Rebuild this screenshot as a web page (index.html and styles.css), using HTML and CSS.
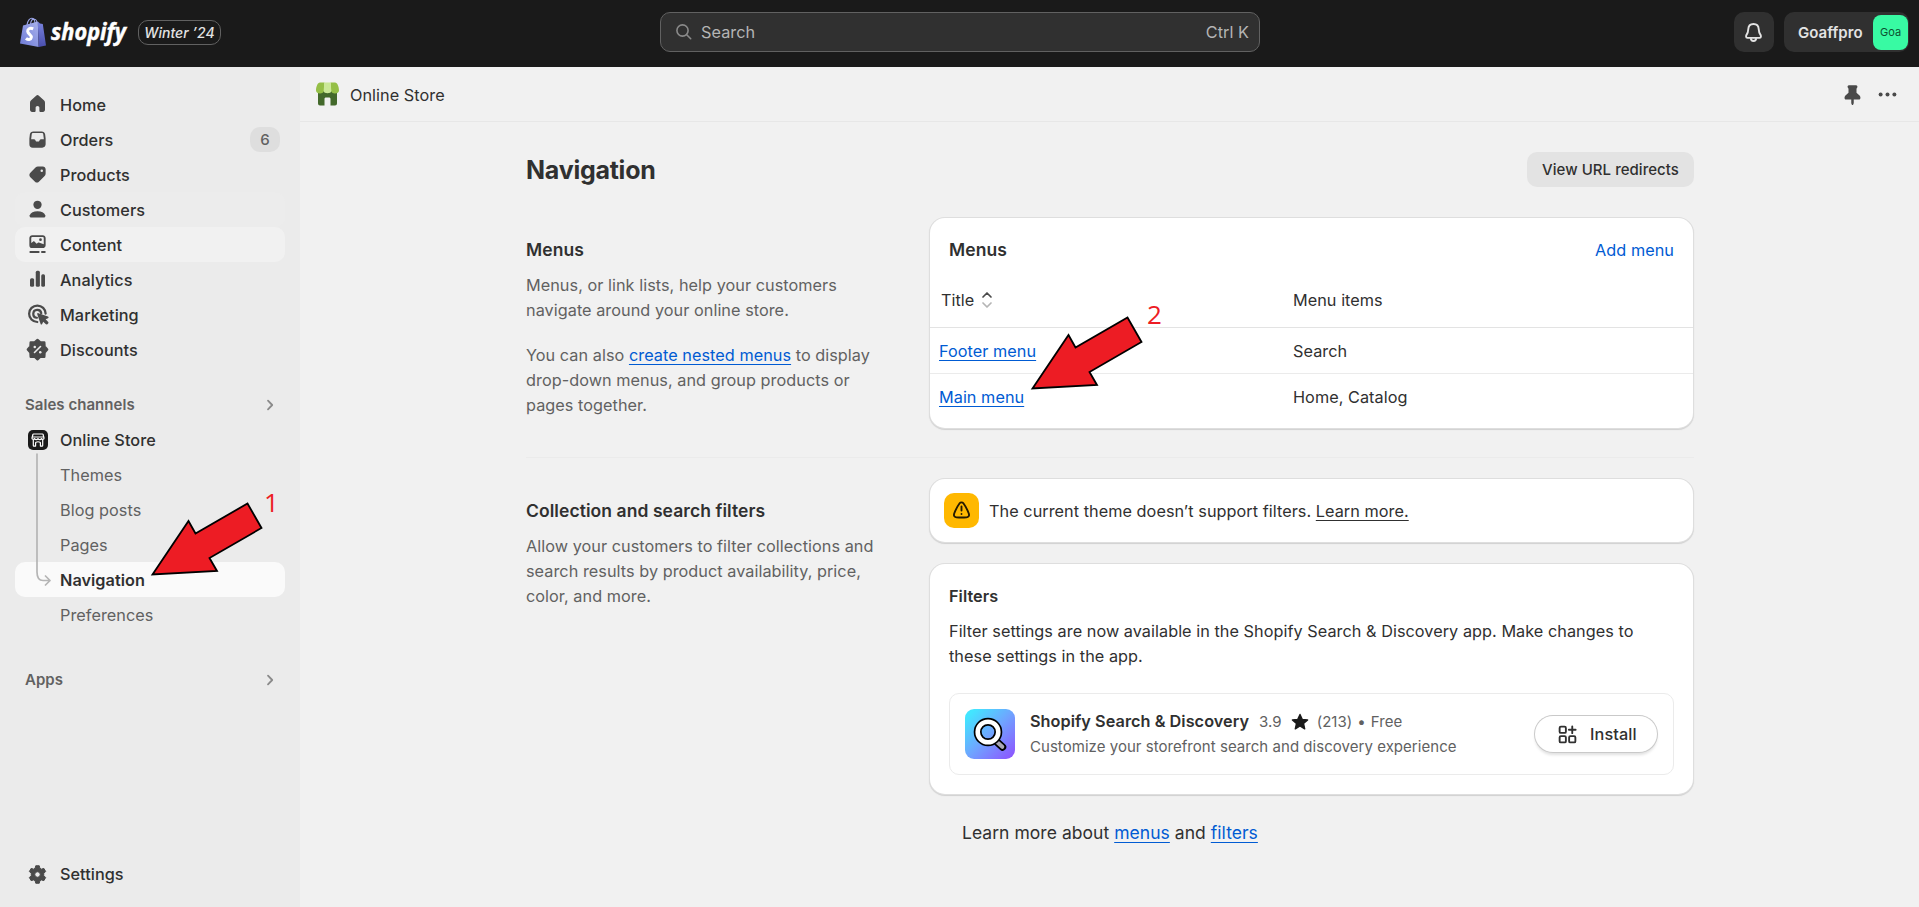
FILE: index.html
```html
<!DOCTYPE html>
<html lang="en">
<head>
<meta charset="utf-8">
<title>Navigation · Online Store</title>
<link rel="stylesheet" href="styles.css">
</head>
<body>
<header class="topbar">
  <div class="brand">
    <svg class="brand-bag" width="26" height="31" viewBox="0 0 26 31">
      <defs><linearGradient id="bagFront" x1="0" y1="1" x2="1" y2="0"><stop offset="0" stop-color="#6d7ad6"/><stop offset="1" stop-color="#a9b2ec"/></linearGradient>
      <linearGradient id="bagSide" x1="0" y1="0" x2="0" y2="1"><stop offset="0" stop-color="#7a84dd"/><stop offset="1" stop-color="#4a4fae"/></linearGradient></defs>
      <path d="M7 8C7.500 3.500 10 1 12 1.200S15 4 15 7M10.500 7C11 3.500 13 2 14.500 2.200S17 4 17 6.500" fill="none" stroke="#9aa4e6" stroke-width="1.100"/>
      <path d="M3 8.500 17.800 4.500 18.700 30 0 26.500Z" fill="url(#bagFront)"/>
      <path d="M17.800 4.500 20 6.500 22.800 7 26 28.500 18.700 30Z" fill="url(#bagSide)"/>
      <path d="M13.200 11.900C9.800 10.300 7.500 12.200 7.700 14.300 7.900 17.200 11.800 17.600 11.300 20.500 10.900 23 8 23.200 6 21.400" fill="none" stroke="#fff" stroke-width="3"/>
    </svg>
    <svg class="brand-word" width="80" height="38" viewBox="0 0 80 38"><text x="1" y="27" textLength="75" lengthAdjust="spacingAndGlyphs">shopify</text></svg>
    <span class="edition">Winter ’24</span>
  </div>
  <div class="search">
    <svg width="18" height="18" viewBox="0 0 18 18"><circle cx="7.500" cy="7.500" r="5.600"/><path d="m11.700 11.700 4 4"/></svg>
    <span class="search-label">Search</span><span>Ctrl K</span>
  </div>
  <div class="account">
    <div class="bell">
      <svg width="25" height="25" viewBox="0 0 20 20"><path d="M10 3.200c-2.600 0-4.100 1.900-4.200 4.300-.1 1.700-.4 2.800-1.200 4-.7 1-.9 2.800.5 2.800h9.800c1.400 0 1.200-1.800.5-2.800-.8-1.200-1.100-2.300-1.200-4-.1-2.400-1.600-4.300-4.200-4.300Z"/><path d="M7.800 14.500c.2 3 4.200 3 4.400 0"/></svg>
    </div>
    <div class="user"><span>Goaffpro</span><span class="avatar">Goa</span></div>
  </div>
</header>
<div class="shell">
  <nav class="sidebar">
    <a class="item"><svg class="ico" viewBox="0 0 20 20"><path d="M8.900 2.900a1.600 1.600 0 0 1 2.200 0l4 3.700c.6.500.9 1.200.9 2v5.600c0 1-.7 1.700-1.700 1.700H12.500c-.6 0-1-.4-1-1v-2.400c0-.8-.6-1.400-1.500-1.400s-1.500.6-1.500 1.400v2.400c0 .6-.4 1-1 1H5.700c-1 0-1.700-.7-1.700-1.700V8.600c0-.8.300-1.500.9-2Z"/></svg><span>Home</span></a>
    <a class="item"><svg class="ico" viewBox="0 0 20 20"><path fill-rule="evenodd" d="M6.600 3.500h6.800c1.400 0 2.500.9 2.700 2.300l.4 3.400v4.600c0 1.500-1.200 2.700-2.700 2.700H6.200a2.700 2.700 0 0 1-2.700-2.700V9.200l.4-3.400C4.100 4.400 5.200 3.500 6.600 3.500Zm0 1.300c-.7 0-1.100.4-1.200 1L4.900 9.800h2.300c.5 0 .8.200 1 .6l.4.700c.2.300.4.400.7.400h1.400c.3 0 .5-.1.700-.4l.4-.7c.2-.4.500-.6 1-.6h2.300l-.5-4c-.1-.6-.5-1-1.200-1Z"/></svg><span>Orders</span><span class="count">6</span></a>
    <a class="item"><svg class="ico" viewBox="0 0 20 20"><path fill-rule="evenodd" d="M10.400 3.500h3.800c1.300 0 2.300 1 2.300 2.300v3.300c0 .8-.3 1.500-.8 2l-4.600 4.700c-.9.900-2.200.9-3.100 0l-3.900-3.900c-.8-.9-.8-2.200 0-3.100l4.300-4.500c.5-.5 1.200-.8 2-.8Zm3 4.500a1 1 0 1 0 0-2 1 1 0 0 0 0 2Z"/></svg><span>Products</span></a>
    <a class="item warm"><svg class="ico" viewBox="0 0 20 20"><circle cx="10" cy="6.200" r="3.300"/><path d="M10 11.300c-3.200 0-5.400 1.300-6.200 3.200-.4 1 .4 1.900 1.400 1.900h9.600c1 0 1.800-.9 1.400-1.900-.8-1.900-3-3.200-6.200-3.200Z"/></svg><span>Customers</span></a>
    <a class="item hover"><svg class="ico" viewBox="0 0 20 20"><path fill-rule="evenodd" d="M5.800 2.500h8.400c1.300 0 2.300 1 2.300 2.300v5.700c0 1.300-1 2.300-2.300 2.300H5.800a2.300 2.300 0 0 1-2.300-2.300V4.800c0-1.300 1-2.300 2.300-2.300Zm0 1.400c-.5 0-.8.300-.8.800v4l1.400-1c.4-.3.900-.3 1.300.1l1.600 1.600 1-.8c.4-.3.900-.3 1.300 0L15 9.800V4.700c0-.5-.3-.8-.8-.8ZM12.400 7.200a1.100 1.100 0 1 0 0-2.200 1.100 1.100 0 0 0 0 2.200Z"/><path d="M4.300 15.900h6.600M13.600 15.900h2.200" stroke="#4a4a4a" stroke-width="1.600" stroke-linecap="round"/></svg><span>Content</span></a>
    <a class="item"><svg class="ico" viewBox="0 0 20 20"><rect x="4" y="9" width="3.300" height="6.800" rx="1.200"/><rect x="8.600" y="3" width="3.300" height="12.800" rx="1.200"/><rect x="13" y="5.700" width="3" height="10.100" rx="1.200"/></svg><span>Analytics</span></a>
    <a class="item"><svg class="ico" viewBox="0 0 20 20"><path d="M16.500 9.300A6.600 6.600 0 1 0 9.800 16M13 9a3.200 3.200 0 1 0-3.500 3.600" fill="none" stroke="#4a4a4a" stroke-width="1.800" stroke-linecap="round"/><path d="M9.800 9.700c-.2-.5.400-1 .9-.8l7.700 2.700c.7.300.7 1.100 0 1.400l-1.900.8 1.900 1.900c.5.500.5 1 .1 1.400l-.6.600c-.4.400-1 .3-1.400-.1l-1.900-1.900-.9 1.900c-.3.600-1 .6-1.200-.1Z"/></svg><span>Marketing</span></a>
    <a class="item"><svg class="ico" viewBox="0 0 20 20"><path fill="#4a4a4a" stroke="#4a4a4a" stroke-width="1.600" stroke-linejoin="round" d="m10 1.500 2.100 1.900 2.900-.1.200 3.100 1.900 2.200-1.900 2.200-.2 3.100-2.900-.1L10 15.700l-2.100-1.900-2.900.1-.2-3.100-1.900-2.200 1.900-2.200.2-3.100 2.900.1Z" transform="translate(-1 .6) scale(1.100)"/><path d="m12.400 7.600-4.800 4.800" stroke="#ebebeb" stroke-width="1.300" stroke-linecap="round"/><circle cx="7.800" cy="8" r="1" fill="#ebebeb"/><circle cx="12.200" cy="12.100" r="1" fill="#ebebeb"/></svg><span>Discounts</span></a>
    <div class="section channels"><span>Sales channels</span><svg width="20" height="20" viewBox="0 0 20 20"><path d="m8 5.700 4.200 4.300L8 14.300"/></svg></div>
    <div class="tree">
      <a class="item"><svg class="ico" viewBox="0 0 20 20"><rect width="20" height="20" rx="5" fill="#1a1a1a"/><path d="M5.500 4h9c.3 0 .5.200.6.500L16 8c.2 1.300-1.800 1.900-2.500.6-.7 1.300-2.800 1.300-3.500 0-.7 1.300-2.800 1.300-3.500 0C5.800 9.900 3.800 9.300 4 8l.9-3.500c.1-.3.300-.5.600-.5ZM4.500 7h11M5.300 9.700v5.800c0 .4.200.6.600.6h1.700V12.800c0-1.400 4.800-1.400 4.800 0v3.300h1.700c.4 0 .6-.2.600-.6V9.700" fill="none" stroke="#fff" stroke-width="1.200" stroke-linejoin="round"/></svg><span>Online Store</span></a>
      <a class="item sub"><span>Themes</span></a>
      <a class="item sub"><span>Blog posts</span></a>
      <a class="item sub"><span>Pages</span></a>
      <a class="item sub current"><span>Navigation</span></a>
      <a class="item sub"><span>Preferences</span></a>
      <svg class="branch" width="20" height="142" viewBox="0 0 20 142"><path d="M2 4V122Q2 130.500 8 130.500H15M10.500 126 15 130.500 10.500 135" fill="none" stroke="#b5b5b5" stroke-width="1.700" stroke-linejoin="round" stroke-linecap="round"/></svg>
    </div>
    <div class="section apps"><span>Apps</span><svg width="20" height="20" viewBox="0 0 20 20"><path d="m8 5.700 4.200 4.300L8 14.300"/></svg></div>
    <a class="item settings"><svg class="ico" viewBox="0 0 20 20"><path fill-rule="evenodd" stroke="#4a4a4a" stroke-width=".8" stroke-linejoin="round" d="M8.600 3h2.800l.5 2 1.200.7 2-.6 1.400 2.500-1.500 1.500v1.800l1.500 1.500-1.400 2.500-2-.6-1.200.7-.5 2H8.600l-.5-2-1.200-.7-2 .6-1.400-2.500L5 10.900V9.100L3.500 7.600l1.400-2.500 2 .6 1.200-.7ZM10 12.200a2.200 2.200 0 1 0 0-4.400 2.200 2.200 0 0 0 0 4.400Z"/></svg><span>Settings</span></a>
  </nav>
  <main class="main">
    <div class="titlebar">
      <svg width="23" height="24" viewBox="0 0 23 24"><path d="M2 9h19v12.500a2 2 0 0 1-2 2h-4.500V17c0-1-.6-1.500-1.500-1.500h-3c-.9 0-1.500.5-1.500 1.500v6.500H4a2 2 0 0 1-2-2Z" fill="#43692b"/><path d="M4 .5h4.500L8 8.500c0 4-8 4-8 0C0 5 1.500.5 4 .5Z" fill="#95bf47"/><path d="M19 .5h-4.500l.5 8c0 4 8 4 8 0 0-3.500-1.500-8-4-8Z" fill="#95bf47"/><path d="M8.300.5h6.400l.6 8.500c0 3-7.600 3-7.600 0Z" fill="#cbe898"/></svg>
      <span class="app-title">Online Store</span>
      <svg width="25" height="25" viewBox="0 0 20 20" fill="#4a4a4a"><path d="M7.200 2.500h5.600c1 0 1.400 1 1 1.800L13.200 5.400v3.200l2.200 2c1.300 1.200 1.300 3.400-.2 3.400h-4.200v2.500c0 .8-.5 1.900-1 1.900s-1-1.100-1-1.900V14H4.800c-1.500 0-1.500-2.200-.2-3.400l2.200-2V5.400l-.6-1.100c-.4-.8 0-1.800 1-1.800Z"/></svg>
      <svg width="25" height="25" viewBox="0 0 20 20" fill="#4a4a4a"><circle cx="4.500" cy="10" r="1.600"/><circle cx="10" cy="10" r="1.600"/><circle cx="15.500" cy="10" r="1.600"/></svg>
    </div>
    <div class="page">
      <div class="page-head"><h1>Navigation</h1><button class="redirects">View URL redirects</button></div>
      <section class="row">
        <div class="intro">
          <h2>Menus</h2>
          <p>Menus, or link lists, help your customers<br>navigate around your online store.</p>
          <p>You can also <a class="link">create nested menus</a> to display<br>drop-down menus, and group products or<br>pages together.</p>
        </div>
        <div class="card menus">
          <div class="card-head"><h2>Menus</h2><a>Add menu</a></div>
          <div class="cols head"><span class="sort">Title <svg width="12" height="18" viewBox="0 0 12 18" fill="none" stroke-width="1.700" stroke-linecap="round" stroke-linejoin="round"><path d="M2 6 6 2l4 4" stroke="#4a4a4a"/><path d="m2 12 4 4 4-4" stroke="#b5b5b5"/></svg></span><span>Menu items</span></div>
          <div class="cols"><span><a class="link">Footer menu</a></span><span>Search</span></div>
          <div class="cols"><span><a class="link">Main menu</a></span><span>Home, Catalog</span></div>
        </div>
      </section>
      <section class="row second">
        <div class="intro">
          <h2>Collection and search filters</h2>
          <p>Allow your customers to filter collections and<br>search results by product availability, price,<br>color, and more.</p>
        </div>
        <div class="stack">
          <div class="card banner">
            <span class="warn"><svg width="25" height="25" viewBox="0 0 20 20" fill="none" stroke="#251a00" stroke-width="1.500" stroke-linecap="round" stroke-linejoin="round"><path d="M8.500 4.200c.7-1 2.300-1 3 0 1.900 2.600 3.300 5.400 4.400 8.400.5 1.700-.4 2.800-1.900 2.900-2.700.2-5.300.2-8 0-1.500-.1-2.400-1.200-1.900-2.900 1.100-3 2.500-5.800 4.400-8.400ZM10 6.700v3.300M10 12.700v.1"/></svg></span>
            <span class="banner-text">The current theme doesn’t support filters. <a class="link dark">Learn more.</a></span>
          </div>
          <div class="card filters">
            <h3>Filters</h3>
            <p>Filter settings are now available in the Shopify Search &amp; Discovery app. Make changes to<br>these settings in the app.</p>
            <div class="app">
              <svg class="app-icon" width="50" height="50" viewBox="0 0 50 50"><defs><linearGradient id="appBg" x1="0" y1="0" x2="1" y2="1"><stop offset=".1" stop-color="#43e5ff"/><stop offset=".5" stop-color="#6fa5ff"/><stop offset="1" stop-color="#8f4fff"/></linearGradient></defs><rect width="50" height="50" rx="9" fill="url(#appBg)"/><path d="m32.500 33.500 5 4.500" stroke="#000" stroke-width="7.500" stroke-linecap="round"/><path d="m32 33 5.300 4.800" stroke="#aaa6b4" stroke-width="4" stroke-linecap="round"/><circle cx="23" cy="23" r="10.300" fill="none" stroke="#000" stroke-width="8"/><circle cx="23" cy="23" r="10.300" fill="none" stroke="#fff" stroke-width="4.600"/></svg>
              <div class="app-text">
                <div class="app-line"><b>Shopify Search &amp; Discovery</b><span>3.9</span><svg width="18" height="18" viewBox="0 0 18 18"><path d="m9 1.500 2.200 4.900 5.400.5-4.100 3.600 1.200 5.300L9 13l-4.700 2.800 1.200-5.300-4.100-3.600 5.400-.5Z" fill="#1a1a1a" stroke="#1a1a1a" stroke-width="1.400" stroke-linejoin="round"/></svg><span>(213)</span><span class="dot">•</span><span>Free</span></div>
                <div>Customize your storefront search and discovery experience</div>
              </div>
              <button class="install"><svg width="25" height="25" viewBox="0 0 20 20" fill="none" stroke="#303030" stroke-width="1.500" stroke-linecap="round" stroke-linejoin="round"><rect x="3.700" y="3.700" width="5" height="5" rx="1"/><rect x="3.700" y="11.300" width="5" height="5" rx="1"/><rect x="11.300" y="11.300" width="5" height="5" rx="1"/><path d="M13.800 3.500v5.400M11.100 6.200h5.400"/></svg>Install</button>
            </div>
          </div>
          <p class="more">Learn more about <a class="link">menus</a> and <a class="link">filters</a></p>
        </div>
      </section>
    </div>
  </main>
</div>
<svg class="arrow arrow-one" width="116" height="78" viewBox="0 0 116 78"><path d="m4.500 73.500 36-53.500 7 12.500 52-30 14 24.500-52 30 7.500 13Z"/></svg>
<span class="mark mark-one">1</span>
<svg class="arrow arrow-two" width="116" height="78" viewBox="0 0 116 78"><path d="m4.500 73.500 36-53.500 7 12.500 52-30 14 24.500-52 30 7.500 13Z"/></svg>
<span class="mark mark-two">2</span>
</body>
</html>
```
FILE: styles.css
```css
* { box-sizing: border-box; }
body {
  margin: 0;
  height: 907px;
  overflow: hidden;
  display: flex;
  flex-direction: column;
  background: #f1f1f1;
  color: #303030;
  font: 400 16.25px/25px Inter, "Liberation Sans", sans-serif;
  letter-spacing: .04px;
}
h1, h2, h3, p { margin: 0; }
button { border: 0; font-family: inherit; color: inherit; }
svg { flex: none; display: block; }

.topbar {
  flex: none;
  height: 67px;
  padding: 12px 10px 15px 20px;
  display: grid;
  grid-template-columns: 640px 600px 1fr;
  background: #1a1a1a;
}
.brand { display: flex; align-items: center; }
.brand-bag { margin: 0 4px 0 0; }
.brand-word { overflow: visible; }
.brand-word text { font: italic 700 24px "Open Sans", sans-serif; fill: #fff; stroke: #fff; stroke-width: .5px; }
.edition {
  width: 83px;
  height: 25px;
  margin-left: 8px;
  border: 1px solid #616161;
  border-radius: 10px;
  color: #e3e3e3;
  font: italic 500 14px/24px Inter, sans-serif;
  text-align: center;
  white-space: nowrap;
}
.search {
  height: 40px;
  padding: 0 10px 0 14px;
  display: flex;
  align-items: center;
  border: 1px solid #616161;
  border-radius: 10px;
  background: #303030;
  color: #b5b5b5;
}
.search svg { fill: none; stroke: #8a8a8a; stroke-width: 1.6; stroke-linecap: round; }
.search-label { flex: 1; margin-left: 8px; }
.account { display: flex; justify-content: flex-end; gap: 10px; }
.bell {
  width: 40px; height: 40px;
  padding-right: 1px;
  display: grid; place-items: center;
  border-radius: 10px;
  background: #303030;
}
.bell svg { fill: none; stroke: #e3e3e3; stroke-width: 1.5; }
.user {
  width: 125px; height: 40px;
  padding: 0 1px 0 14px;
  display: flex; align-items: center; justify-content: space-between;
  border-radius: 10px;
  background: #303030;
  color: #e3e3e3;
  font-size: 15px;
  font-weight: 600;
}
.avatar {
  width: 35px; height: 35px;
  border-radius: 8px;
  background: #38faa3;
  color: #0c5132;
  font: 400 11px/35px Inter, sans-serif;
  text-align: center;
}

.shell { flex: 1; display: flex; min-height: 0; }
.sidebar {
  width: 300px;
  flex: none;
  padding: 20px 15px 15px;
  display: flex;
  flex-direction: column;
  background: #ebebeb;
}
.item {
  height: 35px;
  flex: none;
  padding: 0 5px 0 10px;
  display: flex;
  align-items: center;
  gap: 10px;
  border-radius: 10px;
  font-weight: 500;
}
.item > span { line-height: 23px; padding-top: 2px; }
.ico { width: 25px; height: 25px; fill: #4a4a4a; }
.tree .ico { width: 20px; height: 20px; margin: 0 2px 0 3px; }
.warm { background: #ececec; }
.hover { background: #f1f1f1; }
.count {
  width: 30px; height: 25px;
  margin-left: auto;
  border-radius: 10px;
  background: #dedede;
  color: #616161;
  font-size: 15px;
  font-weight: 500;
  text-align: center;
}
.item > .count { padding-top: 1px; }
.section {
  height: 25px;
  padding: 0 5px 0 10px;
  display: flex; align-items: center; justify-content: space-between;
  color: #616161;
  font-size: 15px;
  font-weight: 600;
}
.section svg { fill: none; stroke: #8a8a8a; stroke-width: 1.8; stroke-linecap: round; stroke-linejoin: round; }
.channels { margin-top: 25px; }
.tree { position: relative; margin-top: 5px; }
.sub { padding-left: 45px; color: #616161; font-weight: 400; }
.current { background: #fafafa; color: #303030; font-weight: 600; }
.branch { position: absolute; left: 20px; top: 28px; }
.apps { margin-top: 35px; }
.settings { margin-top: auto; }
.item.settings > span { padding-top: 0; }

.main { flex: 1; display: flex; flex-direction: column; }
.titlebar {
  height: 55px;
  padding: 0 19px 0 16px;
  display: flex;
  align-items: center;
  border-bottom: 1px solid #e7e7e7;
}
.titlebar svg + svg { margin-left: 10px; }
.app-title { flex: 1; margin-left: 11px; padding-top: 2px; }
.page { width: 1168px; margin-left: 226px; padding-top: 30px; }
.page-head { display: flex; justify-content: space-between; height: 35px; align-items: center; }
h1 { font-size: 25px; font-weight: 650; line-height: 30px; letter-spacing: -.25px; }
.redirects {
  width: 167px; height: 35px;
  padding: 0;
  border-radius: 10px;
  background: #e3e3e3;
  font-size: 15px;
  font-weight: 500;
  letter-spacing: .04px;
}
.row { display: grid; grid-template-columns: 404px 763px; margin-top: 31px; }
.second { margin-top: 29px; padding-top: 21px; border-top: 1px solid #ebebeb; }
.intro { padding-top: 19px; color: #616161; }
.intro p { margin-top: 11px; }
.intro p + p { margin-top: 20px; }
h2 { color: #303030; font-size: 17.5px; font-weight: 600; line-height: 25px; letter-spacing: .07px; }
.card-head h2 { margin-top: -1px; }
.card {
  border-radius: 15px;
  background: #fff;
  box-shadow: 0 0 0 1px #dedede, 0 1px 1px 1px #d0d0d0;
}
.menus { height: 210px; }
.card-head { display: flex; justify-content: space-between; padding: 20px 19px 0 19px; height: 60px; }
.card-head a { color: #005bd3; }
.cols {
  height: 46px;
  padding: 2px 0 0 9px;
  display: grid;
  grid-template-columns: 354px 1fr;
  align-items: center;
  border-top: 1px solid #ebebeb;
}
.head { height: 49px; border: 0; padding: 0 0 4px 9px; }
.head + .cols { border-color: #e3e3e3; }
.sort { display: flex; align-items: center; gap: 7px; padding-left: 2px; }
.sort svg { margin-top: -2px; }
.link {
  color: #005bd3;
  text-decoration: underline 1px;
  text-underline-offset: 3px;
  text-decoration-skip-ink: none;
}
.dark { color: #303030; }
.banner {
  height: 63px;
  padding: 0 14px;
  display: flex;
  align-items: center;
  gap: 10px;
}
.banner-text { padding-top: 2px; }
.warn {
  width: 35px; height: 35px;
  display: grid; place-items: center;
  border-radius: 10px;
  background: #ffb800;
}
.filters { height: 230px; margin-top: 22px; padding: 20px 19px 0 19px; }
h3 { font-size: 16.25px; font-weight: 600; line-height: 25px; }
.filters p { margin-top: 10px; }
.app {
  height: 82px;
  margin-top: 24px;
  padding: 0 16px 0 15px;
  display: flex;
  align-items: center;
  border: 1px solid #ebebeb;
  border-radius: 10px;
}
.app-text { flex: 1; margin-left: 15px; color: #616161; font-size: 15px; }
.app-line { display: flex; align-items: center; }
.app-line b { color: #303030; font-size: 16.25px; font-weight: 600; margin-right: 10px; }
.app-line svg { margin: 0 8px 0 9px; }
.dot { margin: 0 5px; }
.install {
  width: 122px; height: 36px;
  padding: 0 0 0 20px;
  display: flex; align-items: center; gap: 10px;
  border-radius: 18px;
  background: #fff;
  box-shadow: 0 0 0 1px #c9c9c9, 0 3px 3px 0 rgba(0, 0, 0, .12);
  font-size: 16.25px;
  font-weight: 500;
  letter-spacing: .1px;
}
.more { margin: 26px 0 0 32px; font-size: 17.5px; }

.arrow { position: absolute; fill: #ed1c24; stroke: #000; stroke-width: 1.8; }
.arrow-one { left: 148px; top: 501px; }
.arrow-two { left: 1028px; top: 315px; }
.mark { position: absolute; color: #ed1c24; font: 400 26px/30px "Open Sans", sans-serif; }
.mark-one { left: 264px; top: 487px; }
.mark-two { left: 1147px; top: 299px; }
```
